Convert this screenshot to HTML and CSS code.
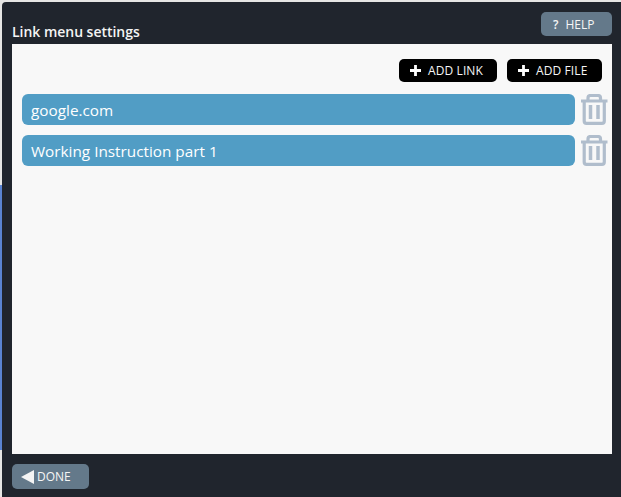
FILE: index.html
```html
<!DOCTYPE html>
<html lang="en">
<head>
<meta charset="utf-8">
<title>Link menu settings</title>
<link rel="stylesheet" href="styles.css">
</head>
<body>
<div class="backdrop"></div>
<section class="dialog">
  <header class="dialog-head">
    <h1 class="title">Link menu settings</h1>
    <button class="btn btn-grey btn-help"><span class="q">?</span>HELP</button>
  </header>
  <main class="panel">
    <div class="actions">
      <button class="btn btn-black btn-link">
        <svg class="plus" viewBox="0 0 13 13"><path d="M6.500 1v11M1 6.500h11"/></svg>ADD LINK
      </button>
      <button class="btn btn-black btn-file">
        <svg class="plus" viewBox="0 0 13 13"><path d="M6.500 1v11M1 6.500h11"/></svg>ADD FILE
      </button>
    </div>
    <ul class="rows">
      <li class="row">
        <span class="pill">google.com</span>
        <svg class="trash" viewBox="0 0 27 31"><path class="s" d="M0 7h26.500M7 6.500V4Q7 1.500 9.500 1.500h7.500Q19.500 1.500 19.500 4V6.500M3.200 8v19Q3.200 29.300 5.500 29.300h15.500Q23.300 29.300 23.300 27V8"/><path class="s bars" d="M9.500 11v14M17 11v14"/></svg>
      </li>
      <li class="row">
        <span class="pill">Working Instruction part 1</span>
        <svg class="trash" viewBox="0 0 27 31"><path class="s" d="M0 7h26.500M7 6.500V4Q7 1.500 9.500 1.500h7.500Q19.500 1.500 19.500 4V6.500M3.200 8v19Q3.200 29.300 5.500 29.300h15.500Q23.300 29.300 23.300 27V8"/><path class="s bars" d="M9.500 11v14M17 11v14"/></svg>
      </li>
    </ul>
  </main>
  <footer class="dialog-foot">
    <button class="btn btn-grey btn-done"><span class="tri"></span>DONE</button>
  </footer>
</section>
</body>
</html>
```
FILE: styles.css
```css
* { box-sizing: border-box; }
html, body { height: 100%; }
body {
  margin: 0;
  padding: 2px 0 0 2px;
  background: #e6e6e4;
  font-family: "Open Sans", "Noto Sans", sans-serif;
  overflow: hidden;
  position: relative;
}
.backdrop {
  position: absolute;
  left: 0;
  top: 185px;
  width: 2px;
  height: 265px;
  background: #5a84d2;
}
.dialog {
  position: relative;
  height: 495px;
  background: #20252d;
  border-top-left-radius: 4px;
  display: flex;
  flex-direction: column;
  padding: 0 9px 0 10px;
}
.dialog-head {
  height: 42px;
  flex: none;
  display: flex;
  justify-content: space-between;
  align-items: flex-start;
}
.title {
  margin: 20px 0 0;
  font-size: 14px;
  line-height: 20px;
  font-weight: 600;
  color: #f4f4f4;
  letter-spacing: -0.03px;
}
.btn {
  border: 0;
  padding: 0;
  font-family: inherit;
  font-size: 12px;
  color: #f6f6f6;
  display: flex;
  align-items: center;
  white-space: nowrap;
}
.btn-grey { background: #64798a; border-radius: 5px; }
.btn-black { background: #000; border-radius: 5px; height: 23px; padding-left: 10px; letter-spacing: 0.1px; }
.btn-help { width: 71px; height: 24px; margin-top: 10px; padding-left: 12px; }
.q { margin-right: 7px; font-weight: 600; }
.panel {
  flex: none;
  height: 410px;
  background: #f8f8f8;
  padding: 15px 4px 0 10px;
}
.actions {
  display: flex;
  justify-content: flex-end;
  gap: 10px;
  padding-right: 6px;
}
.btn-link { width: 98px; }
.btn-file { width: 95px; }
.plus {
  width: 13px;
  height: 13px;
  margin-right: 6px;
  fill: none;
  stroke: #fff;
  stroke-width: 2.800;
}
.rows {
  list-style: none;
  margin: 12px 0 0;
  padding: 0;
  display: flex;
  flex-direction: column;
  gap: 10px;
}
.row { display: flex; align-items: center; gap: 6px; }
.pill {
  width: 553px;
  height: 31px;
  background: #519dc5;
  border-radius: 6px;
  color: #fff;
  font-size: 15.300px;
  line-height: 32px;
  padding-left: 9px;
}
.trash { width: 27px; height: 31px; flex: none; }
.s { fill: none; stroke: #b0bdcc; stroke-width: 3.200; stroke-linecap: butt; }
.bars { stroke-width: 3.500; }
.dialog-foot { flex: 1; padding-top: 10px; }
.btn-done { width: 77px; height: 25px; padding-left: 9px; }
.tri {
  width: 0;
  height: 0;
  margin-right: 3px;
  border-style: solid;
  border-width: 7px 13px 7px 0;
  border-color: transparent #f4f4f4 transparent transparent;
}
```
